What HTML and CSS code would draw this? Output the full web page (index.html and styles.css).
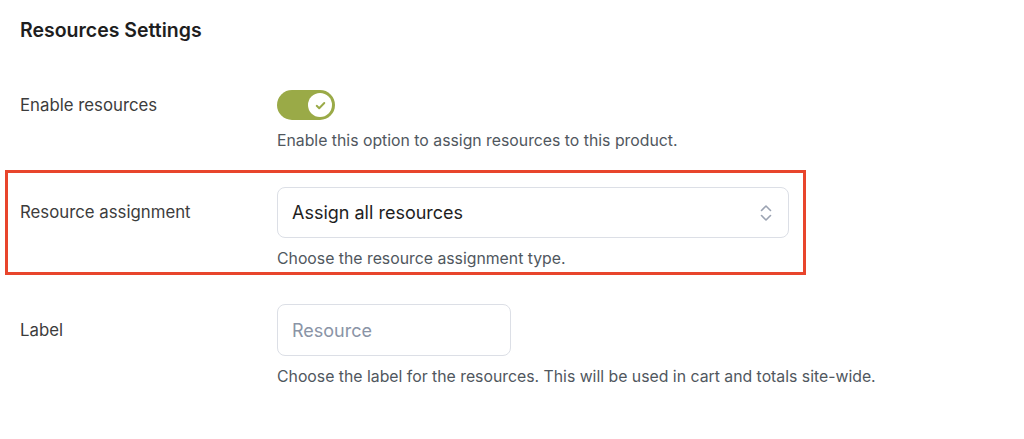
FILE: index.html
```html
<!doctype html>
<html>
<head>
<meta charset="utf-8">
<meta name="viewport" content="width=device-width, initial-scale=1.0">
<link rel="stylesheet" href="styles.css">
<title>Resources Settings</title>
</head>
<body>
<div class="settings">
  <h2 class="settings-title">Resources Settings</h2>

  <div class="row row-toggle">
    <div class="row-label">Enable resources</div>
    <div class="row-field">
      <span class="toggle">
        <span class="toggle-knob">
          <svg width="13" height="13" viewBox="0 0 12 12"><path d="M2.5 6.3l2.3 2.2 4.7-4.8" fill="none" stroke="#9aaa47" stroke-width="1.8" stroke-linecap="round" stroke-linejoin="round"/></svg>
        </span>
      </span>
      <p class="row-desc">Enable this option to assign resources to this product.</p>
    </div>
  </div>

  <div class="row row-marked">
    <div class="row-label">Resource assignment</div>
    <div class="row-field">
      <div class="select">
        <span>Assign all resources</span>
        <svg class="select-arrows" width="14" height="20" viewBox="0 0 14 20"><path d="M2.5 7.5l4.5-4.5 4.5 4.5M2.5 12.5l4.5 4.5 4.5-4.5" fill="none" stroke="#9ba3b2" stroke-width="1.6" stroke-linecap="round" stroke-linejoin="round"/></svg>
      </div>
      <p class="row-desc">Choose the resource assignment type.</p>
    </div>
  </div>

  <div class="row row-input">
    <div class="row-label">Label</div>
    <div class="row-field">
      <input class="text-input" type="text" placeholder="Resource">
      <p class="row-desc">Choose the label for the resources. This will be used in cart and totals site-wide.</p>
    </div>
  </div>
</div>
</body>
</html>
```

FILE: styles.css
```css
body {
    margin: 0;
    background-color: white;
    font-family: Inter, "Noto Sans", Arial, sans-serif;
    color: #1e1e1e;
}
p {
    margin: 0;
}
.settings {
    padding: 18px 20px 0 20px;
}
.settings-title {
    margin: 0;
    font-size: 19.5px;
    line-height: 24px;
    font-weight: 600;
    color: #1e1e1e;
}
.row {
    display: flex;
    align-items: flex-start;
}
.row-label {
    width: 257px;
    flex-shrink: 0;
    font-size: 16.8px;
    color: #3c3c3c;
}
.row-field {
    width: 512px;
}
.row-desc {
    font-size: 15.8px;
    line-height: 22px;
    color: #50575e;
    margin-top: 10px;
    white-space: nowrap;
}

/* toggle */
.row-toggle {
    margin-top: 48px;
}
.row-toggle .row-label {
    line-height: 30px;
}
.toggle {
    display: flex;
    justify-content: flex-end;
    align-items: center;
    width: 58px;
    height: 30px;
    padding: 3px;
    box-sizing: border-box;
    border-radius: 15px;
    background-color: #9aaa47;
}
.toggle-knob {
    display: flex;
    align-items: center;
    justify-content: center;
    width: 24px;
    height: 24px;
    border-radius: 50%;
    background-color: white;
}

/* highlighted row */
.row-marked {
    margin: 18px 0 0 -15px;
    width: 801px;
    box-sizing: border-box;
    padding: 14px 0 2px 12px;
    border: 3px solid #e8452c;
}
.row-marked .row-label {
    line-height: 51px;
}
.select {
    display: flex;
    align-items: center;
    justify-content: space-between;
    height: 51px;
    box-sizing: border-box;
    padding: 0 15px 0 14px;
    border: 1px solid #dcdfe6;
    border-radius: 8px;
    font-size: 18px;
    color: #1e1e1e;
}

/* text input */
.row-input {
    margin-top: 29px;
}
.row-input .row-label {
    line-height: 52px;
}
.text-input {
    display: block;
    width: 234px;
    height: 52px;
    box-sizing: border-box;
    padding: 0 14px;
    border: 1px solid #dcdfe6;
    border-radius: 8px;
    font-family: inherit;
    font-size: 18px;
    color: #1e1e1e;
}
.text-input::placeholder {
    color: #8a94a6;
}
```
